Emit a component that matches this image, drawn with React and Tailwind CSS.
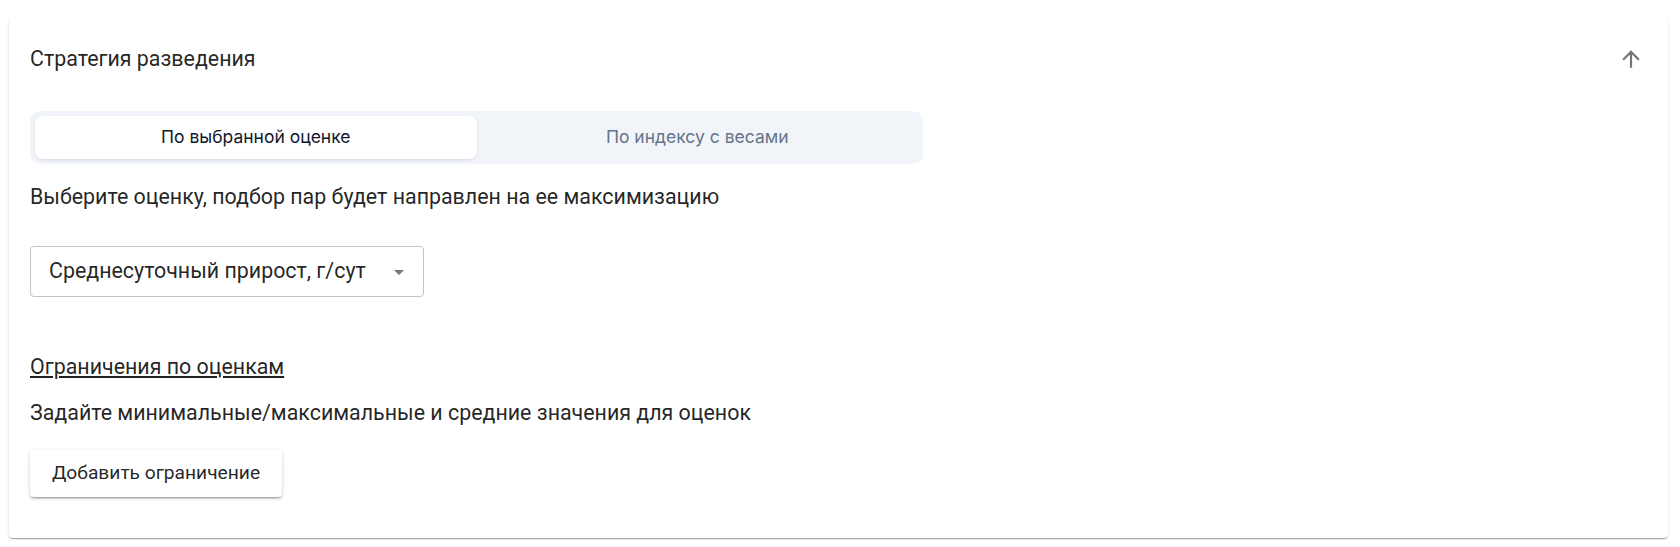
import React, { useState } from 'react';

const ArrowUp = () => (
  <svg viewBox="0 0 24 24" className="w-[26px] h-[26px]" fill="#757575">
    <path d="M4 12l1.41 1.41L11 7.83V20h2V7.83l5.58 5.59L20 12l-8-8-8 8z" />
  </svg>
);

const App = () => {
  const [mode, setMode] = useState('score');

  return (
    <div className="min-h-screen bg-white pl-[9px] pr-3 pt-[17px] font-['Roboto',sans-serif] text-[rgba(0,0,0,0.87)]">
      {/* Карточка стратегии */}
      <div className="bg-white rounded-[4px] shadow-[0px_2px_1px_-1px_rgba(0,0,0,0.2),0px_1px_1px_0px_rgba(0,0,0,0.14),0px_1px_3px_0px_rgba(0,0,0,0.12)] pl-[21px] pr-[24px] pt-[30px] pb-[41px]">
        <div className="flex items-center justify-between h-6">
          <h2 className="text-[21.4px] leading-6">Стратегия разведения</h2>
          <ArrowUp />
        </div>

        {/* Переключатель */}
        <div className="mt-[40px] w-[893px] grid grid-cols-2 bg-[#f1f5f9] rounded-[10px] p-[5px] font-['Inter',sans-serif]">
          <button
            onClick={() => setMode('score')}
            className={
              mode === 'score'
                ? 'h-[43px] rounded-[8px] bg-white shadow-[0_1px_3px_rgba(15,23,42,0.12)] text-[17.5px] text-[#0f172a]'
                : 'h-[43px] rounded-[8px] text-[17.5px] text-[#64748b]'
            }
          >
            По выбранной оценке
          </button>
          <button
            onClick={() => setMode('index')}
            className={
              mode === 'index'
                ? 'h-[43px] rounded-[8px] bg-white shadow-[0_1px_3px_rgba(15,23,42,0.12)] text-[17.5px] text-[#0f172a]'
                : 'h-[43px] rounded-[8px] text-[17.5px] text-[#64748b]'
            }
          >
            По индексу с весами
          </button>
        </div>

        <p className="mt-[21px] text-[21.4px] leading-6">Выберите оценку, подбор пар будет направлен на ее максимизацию</p>

        {/* Селект */}
        <div className="mt-[37px] w-[394px] h-[51px] border border-[#c4c4c4] rounded-[4px] flex items-center justify-between pl-[18px] pr-[12px]">
          <span className="text-[21.4px]">Среднесуточный прирост, г/сут</span>
          <svg viewBox="0 0 24 24" className="w-6 h-6" fill="#757575">
            <path d="M7 10l5 5 5-5z" />
          </svg>
        </div>

        <div className="mt-[58px]">
          <a href="#" className="text-[21.4px] leading-6 underline underline-offset-2">Ограничения по оценкам</a>
        </div>
        <p className="mt-[20px] text-[21.4px] leading-6">Задайте минимальные/максимальные и средние значения для оценок</p>

        <button className="mt-[25px] w-[252px] h-[47px] bg-white rounded-[4px] text-[19.2px] shadow-[0px_3px_1px_-2px_rgba(0,0,0,0.2),0px_2px_2px_0px_rgba(0,0,0,0.14),0px_1px_5px_0px_rgba(0,0,0,0.12)]">
          Добавить ограничение
        </button>
      </div>
    </div>
  );
};

export default App;
